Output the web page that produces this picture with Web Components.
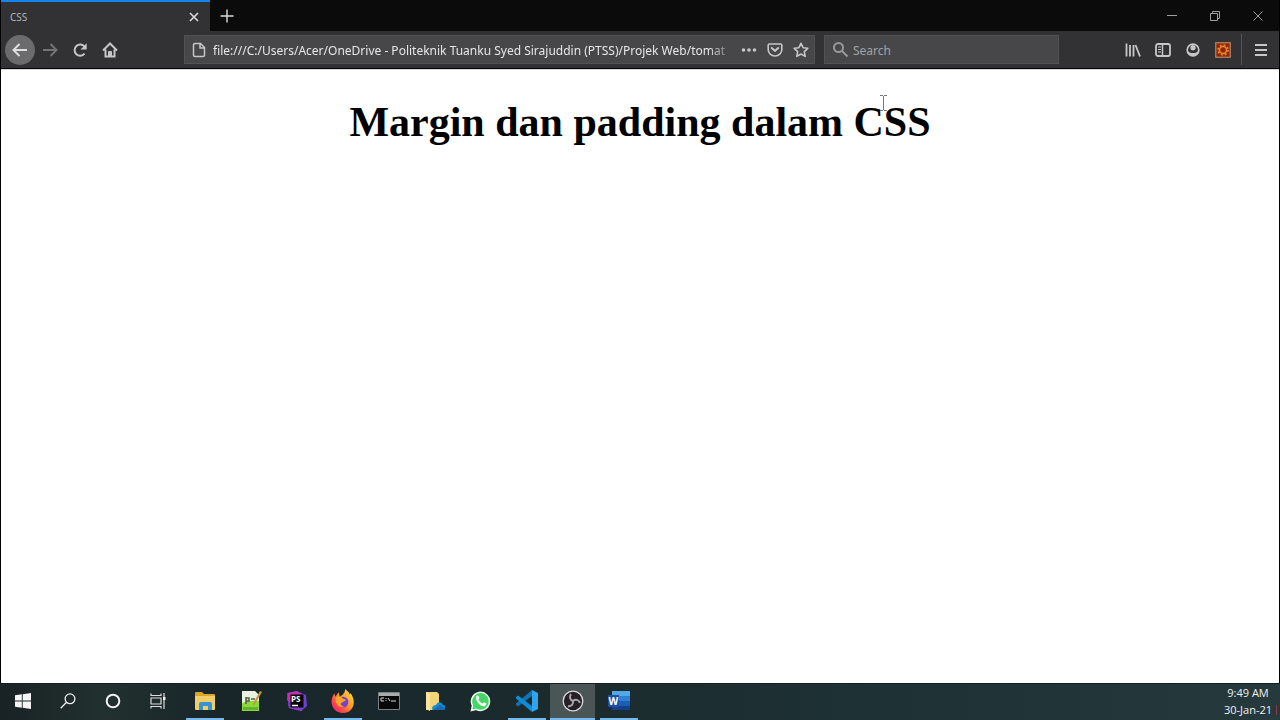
<!DOCTYPE html>
<html lang="ms">
<head>
<meta charset="utf-8">
<title>CSS</title>
<style>
html, body { margin: 0; height: 100%; background: #000; }
body { font-family: "Noto Sans", "Open Sans", sans-serif; font-size: 12px; }
</style>
</head>
<body>
<desktop-screen></desktop-screen>

<template id="desktop-screen">
  <style>
    :host { display: flex; flex-direction: column; min-height: 100vh; }
    .window { flex: 1; display: flex; flex-direction: column; padding: 0 1px; background: #000; }
    page-view { flex: 1; }
  </style>
  <div class="window">
    <tab-strip></tab-strip>
    <nav-bar></nav-bar>
    <page-view><span slot="title">Margin dan padding dalam CSS</span></page-view>
  </div>
  <task-bar></task-bar>
</template>

<template id="tab-strip">
  <style>
    :host { display: flex; height: 31px; background: #0b0b0c; }
    .tab { display: flex; align-items: center; justify-content: space-between; width: 209px; box-sizing: border-box; padding: 0 4px 0 9px; border-top: 2px solid #1484ee; background: #323234; color: #b4b4b6; font-size: 10px; }
    button { display: flex; align-items: center; justify-content: center; padding: 0; border: 0; background: none; color: #dcdcdc; }
    .close { width: 24px; height: 24px; }
    .new { width: 33px; }
    .controls { display: flex; margin-left: auto; }
    .controls button { width: 43px; color: #a0a0a0; }
    svg { display: block; fill: none; stroke: currentColor; }
  </style>
  <div class="tab"><span>CSS</span>
    <button class="close" aria-label="Close tab"><svg width="10" height="10" viewBox="0 0 10 10" stroke-width="1.6"><path d="M1 1l8 8M9 1l-8 8"/></svg></button>
  </div>
  <button class="new" aria-label="New tab"><svg width="14" height="14" viewBox="0 0 14 14" stroke-width="1.4"><path d="M7 .5v13M.5 7h13"/></svg></button>
  <div class="controls">
    <button aria-label="Minimize"><svg width="10" height="10" viewBox="0 0 10 10"><path d="M0 4.500h10"/></svg></button>
    <button aria-label="Restore"><svg width="10" height="10" viewBox="0 0 10 10"><path d="M.5 2.500h7v7h-7zM2.500 2.500v-2h7v7h-2"/></svg></button>
    <button aria-label="Close"><svg width="10" height="10" viewBox="0 0 10 10"><path d="M.5 .5l9 9M9.500 .5l-9 9"/></svg></button>
  </div>
</template>

<template id="nav-bar">
  <style>
    :host { display: flex; align-items: center; height: 37px; padding: 0 3px 0 4px; background: #323234; border-bottom: 1px solid #050505; color: #c6c6c8; }
    button { display: flex; flex: none; align-items: center; justify-content: center; width: 30px; height: 30px; padding: 0; border: 0; background: none; color: inherit; }
    svg { display: block; flex: none; fill: none; stroke: currentColor; stroke-width: 2; }
    .back { background: #6b6b6d; border-radius: 50%; color: #dedede; }
    .back + button { color: #737375; }
    .field { display: flex; align-items: center; box-sizing: border-box; height: 29px; border: 1px solid #525254; background: #474749; }
    .url { flex: 1; margin-left: 59px; padding-left: 6px; min-width: 0; }
    .url button { width: 26px; height: 26px; }
    .search { flex: none; width: 235px; margin: 0 59px 0 9px; padding-left: 7px; color: #98989a; }
    input { flex: 1; min-width: 0; height: 26px; padding: 2px 0 0; border: 0; outline: 0; box-sizing: border-box; background: none; font: inherit; color: #e6e6e6; }
    .url input { margin-left: 6px; -webkit-mask-image: linear-gradient(to left, transparent, #000 28px); mask-image: linear-gradient(to left, transparent, #000 28px); }
    .search input { margin-left: 4px; }
    input::placeholder { color: #a2a2a4; opacity: 1; }
    .rule { width: 1px; height: 31px; margin: 0 4px 0 3px; background: #545456; }
  </style>
  <button class="back" aria-label="Back"><svg width="16" height="16" viewBox="0 0 16 16"><path d="M15 8H2M7.500 2L1.500 8l6 6"/></svg></button>
  <button aria-label="Forward"><svg width="16" height="16" viewBox="0 0 16 16"><path d="M1 8h13M8.500 2l6 6-6 6"/></svg></button>
  <button aria-label="Reload"><svg width="16" height="16" viewBox="0 0 16 16"><path d="M12.500 11.700A5.600 5.600 0 1 1 12.600 4.700"/><path d="M14.700 1.200v6.200H8.500z" fill="currentColor" stroke="none"/></svg></button>
  <button aria-label="Home"><svg width="16" height="16" viewBox="0 0 16 16"><path d="M1 8.500L8 1.500l7 7M3.500 7.500V14.500h9V7.500"/><path d="M6.500 14V9.500h3V14" fill="currentColor" style="stroke-width:1"/></svg></button>
  <div class="field url">
    <svg width="16" height="16" viewBox="0 0 16 16" role="img" aria-label="Local file"><path d="M4 1.500h5.500l4 4V13a1.500 1.500 0 0 1-1.500 1.500H4A1.500 1.500 0 0 1 2.500 13V3A1.500 1.500 0 0 1 4 1.500zM9 2v4h4" style="stroke-width:1.500"/></svg>
    <input type="text" aria-label="Address" value="file:///C:/Users/Acer/OneDrive - Politeknik Tuanku Syed Sirajuddin (PTSS)/Projek Web/tomat">
    <button aria-label="Page actions"><svg width="16" height="16" viewBox="0 0 16 16"><g fill="currentColor" stroke="none"><circle cx="2.500" cy="8" r="1.800"/><circle cx="8" cy="8" r="1.800"/><circle cx="13.500" cy="8" r="1.800"/></g></svg></button>
    <button aria-label="Save to Pocket"><svg width="16" height="16" viewBox="0 0 16 16"><path d="M2.500 2h11A1.200 1.200 0 0 1 14.800 3.200V7.500A6.800 6.500 0 0 1 1.200 7.500V3.200A1.200 1.200 0 0 1 2.500 2z" style="stroke-width:1.600"/><path d="M4.800 6L8 9l3.200-3" stroke-linecap="round"/></svg></button>
    <button aria-label="Bookmark"><svg width="16" height="16" viewBox="0 0 16 16"><path d="M8 1.300l2.100 4.400 4.700.6-3.500 3.300.9 4.800L8 12l-4.200 2.400.9-4.800L1.200 6.300l4.700-.6z" style="stroke-width:1.600;stroke-linejoin:round"/></svg></button>
  </div>
  <div class="field search">
    <svg width="17" height="17" viewBox="0 0 17 17"><circle cx="6.500" cy="6.500" r="4.500"/><path d="M10 10l5.500 5.500"/></svg>
    <input type="search" aria-label="Search" placeholder="Search">
  </div>
  <button aria-label="Library"><svg width="16" height="16" viewBox="0 0 16 16" style="stroke-width:1.800"><path d="M1.500 1.500v13M5 3v11.500M8.500 3v11.500M10.500 3l4.500 11.500"/></svg></button>
  <button aria-label="Sidebars"><svg width="16" height="16" viewBox="0 0 16 16"><rect x="1" y="2" width="14" height="12" rx="2" style="stroke-width:1.800"/><path d="M7.500 2v12" style="stroke-width:1.500"/><path d="M3 5h3M3 7.500h3M3 10h3" style="stroke-width:1.200"/></svg></button>
  <button aria-label="Account"><svg width="16" height="16" viewBox="0 0 16 16"><circle cx="8" cy="8" r="5.800" style="stroke-width:1.700"/><circle cx="8" cy="5.700" r="2.600" fill="currentColor" stroke="none"/><path d="M2.500 8.500c1.500 3.400 9.500 3.400 11 0v2.500L8 14.300 2.500 11z" fill="currentColor" stroke="none"/></svg></button>
  <button aria-label="Extension"><svg width="16" height="16" viewBox="0 0 16 16"><rect x=".75" y=".75" width="14.500" height="14.500" fill="#8f2806" stroke="#b9846c" style="stroke-width:1.200"/><circle cx="8" cy="8" r="3.500" stroke="#e8892e" style="stroke-width:1.500"/><circle cx="8" cy="8" r="5" stroke="#e8892e" stroke-dasharray="1.900 2.027" style="stroke-width:1.600"/></svg></button>
  <span class="rule"></span>
  <button aria-label="Menu"><svg width="16" height="16" viewBox="0 0 16 16"><path d="M2 3h12M2 8h12M2 13h12"/></svg></button>
</template>

<template id="page-view">
  <style>
    :host { display: block; position: relative; background: #fff; border-top: 1px solid #d6d6d6; color: #000; }
    h1 { margin: 28px 0; text-align: center; font: bold 42px/48px "Liberation Serif", serif; }
    .pointer { position: absolute; top: 25px; left: calc(50% + 240px); fill: none; stroke: #777; }
  </style>
  <h1><slot name="title"></slot></h1>
  <svg class="pointer" width="7" height="16" viewBox="0 0 7 16"><path d="M0 .5h3M4 .5h3M3.500 1v14M0 15.500h3M4 15.500h3"/></svg>
</template>

<template id="task-bar">
  <style>
    :host { display: flex; height: 37px; box-sizing: border-box; border-top: 1px solid #14201f; background: linear-gradient(90deg, #192225, #22302f 8%, #18262a 17%, #1b2b2e 45%, #1f3336 75%, #263a3d); }
    .system { display: flex; margin-right: 2px; }
    .system task-button { width: 45px; }
    time { display: block; width: 56px; margin-left: auto; color: #f2f2f2; font-family: "Open Sans", "Noto Sans", sans-serif; font-size: 11px; line-height: 17px; text-align: center; }
    .notice { width: 1px; height: 10px; margin: 21px 3px 0 0; background: #8e3b48; }
    svg { display: block; }
  </style>
  <div class="system">
    <task-button name="Start"><svg width="16" height="16" viewBox="0 0 16 16" fill="#f5f5f5"><path d="M0 2.300l6.800-1V7.600H0zM7.700 1.200L16 0v7.600H7.700zM0 8.400h6.800v6.300L0 13.700zM7.700 8.400H16V16l-8.300-1.200z"/></svg></task-button>
    <task-button name="Search"><svg width="16" height="16" viewBox="0 0 16 16" fill="none" stroke="#eee" stroke-width="1.300"><circle cx="10" cy="5.800" r="4.900"/><path d="M6.500 9.300L.7 15.300"/></svg></task-button>
    <task-button name="Cortana"><svg width="16" height="16" viewBox="0 0 16 16" fill="none" stroke="#f2f2f2" stroke-width="2"><circle cx="8" cy="8" r="6.300"/></svg></task-button>
    <task-button name="Task view"><svg width="16" height="16" viewBox="0 0 16 16" fill="none" stroke="#ddd" stroke-width="1.200"><path d="M1 .5v2h10v-2M1 5h10v6H1zM1 15.500v-2h10v2M14 0v16"/><path d="M13 4h2.500v3H13z" fill="#eee" stroke="none"/></svg></task-button>
  </div>
  <task-button name="File Explorer" state="open"><svg width="22" height="20" viewBox="0 0 22 20"><path d="M1 2q0-1 1-1h6l2 2h10q1 0 1 1v14H1z" fill="#dca32b"/><path d="M1 5h20v13q0 1-1 1H2q-1 0-1-1z" fill="#f0cd68"/><path d="M5 19v-6q0-2 2-2h9q2 0 2 2v6h-4v-4H9v4z" fill="#3594d1"/></svg></task-button>
  <task-button name="Notepad++"><svg width="22" height="22" viewBox="0 0 22 22"><path d="M2 1h13l4 4v16H2z" fill="#e9f1df"/><path d="M2 13q8-3 17-2v10H2z" fill="#8ed83c"/><path d="M3 17h15v3H3z" fill="#5eb528"/><path d="M6 7v7M6 8h3v3H6M11 9h4" stroke="#4c5d42" fill="none" stroke-width="1.500"/><path d="M20 1l2 1-7 12-2 2 .3-3z" fill="#c49a43"/></svg></task-button>
  <task-button name="PhpStorm"><svg width="22" height="22" viewBox="0 0 22 22"><path d="M1 3l10-2 9 4 1 11-6 5-12-3L2 12z" fill="#6a43d0"/><path d="M2 3l9-2 4 3-11 9-3-3z" fill="#c22fb0"/><path d="M2 13l4 2 11 5-2 1-12-3z" fill="#8a38ce"/><path d="M4.500 4.500h13v13h-13z" fill="#080509"/><path d="M6 15.500h6" stroke="#fff" stroke-width="1.500"/><text x="5" y="11.500" font-family="Open Sans, sans-serif" font-weight="700" font-size="8" fill="#fff">PS</text></svg></task-button>
  <task-button name="Firefox" state="open"><svg width="24" height="24" viewBox="0 0 22 22"><defs><linearGradient id="fire" x1="1" y1="0" x2="0" y2="1"><stop stop-color="#fff044"/><stop offset=".45" stop-color="#ff9527"/><stop offset=".75" stop-color="#ff3c50"/><stop offset="1" stop-color="#e42795"/></linearGradient></defs><path d="M13 0c2 2 4 3 4 5l1-1c6 8 2 18-7 18C3 22-1 15 1 8l2-4 1 3 3-4 1 4c2-1 5-3 5-7z" fill="url(#fire)"/><circle cx="11" cy="12" r="5" fill="#7542cd"/><path d="M4 8c3-2 5-1 7 1l3 1-3 2c-3 1-3 3 1 4-5 2-8-2-8-8z" fill="#ffa42b"/></svg></task-button>
  <task-button name="Command Prompt"><svg width="22" height="20" viewBox="0 0 22 20"><path d="M.5 1.500h21v17H.5z" fill="#070808" stroke="#7b8281"/><path d="M1 2h20v3H1z" fill="#a7adad"/><path d="M6 7H3v3h3M8 7v1M8 9v1M10 7l2 3M13 10h5" stroke="#d6d6d6" fill="none"/></svg></task-button>
  <task-button name="OneDrive folder"><svg width="20" height="20" viewBox="0 0 20 20"><path d="M1 1h11l2 2v16H1z" fill="#f1d477"/><path d="M1 1l4 2v17l-4-2z" fill="#fbe6a0"/><path d="M7 18c0-3 2-4 4-4 2-4 6-3 7 0 3 0 3 5 0 5H9q-2 0-2-1z" fill="#168bd5"/><path d="M8 19l7-5 5 3q0 2-2 2z" fill="#176cb0"/></svg></task-button>
  <task-button name="WhatsApp"><svg width="22" height="22" viewBox="0 0 22 22"><path d="M2.500 15.500A9 9 0 1 1 6.300 19.300L1.500 20.500z" fill="#43d665" stroke="#f1fff3" stroke-width="1.500"/><path d="M6.500 6q1-1 2 0l1 2-1 1.500c1 2 2 3 4 4l1.500-1.200 2.500 1.200q0 2-2 2.700C10 17 4.500 10 6.500 6z" fill="#fff"/></svg></task-button>
  <task-button name="Visual Studio Code" state="open"><svg width="24" height="24" viewBox="0 0 24 24"><path d="M17 1v6L3 17.500l-2-1.500v-1.500z" fill="#1272b4"/><path d="M1 8l2-1.500L17 17v6L1 9.500z" fill="#138ad5"/><path d="M17 1l6 3v16l-6 3z" fill="#30a5ed"/></svg></task-button>
  <task-button name="OBS Studio" state="active"><svg width="22" height="22" viewBox="0 0 22 22"><circle cx="11" cy="11" r="9.800" fill="#242126" stroke="#ded9df" stroke-width="1.300"/><g fill="none" stroke="#aaa5ac" stroke-width="2"><path d="M11 11c-3-1-4-4-2-7"/><path d="M11 11c-3-1-4-4-2-7" transform="rotate(120 11 11)"/><path d="M11 11c-3-1-4-4-2-7" transform="rotate(240 11 11)"/></g></svg></task-button>
  <task-button name="Word" state="open"><svg width="24" height="22" viewBox="0 0 24 22"><path d="M5 1h18v5H5z" fill="#50a8e7"/><path d="M5 6h18v5H5z" fill="#317fd2"/><path d="M5 11h18v5H5z" fill="#1c5db5"/><path d="M5 16h18v4H5z" fill="#16418a"/><path d="M1 5h11v12H1z" fill="#1b4fa9"/><text x="1.500" y="14.500" font-family="Open Sans, sans-serif" font-weight="700" font-size="10" fill="#fff">W</text></svg></task-button>
  <time datetime="2021-01-30T09:49">9:49 AM<br>30-Jan-21</time><span class="notice"></span>
</template>

<template id="task-button">
  <style>
    :host { display: block; width: 46px; height: 36px; }
    button { display: flex; align-items: center; justify-content: center; width: 100%; height: 36px; padding: 0; border: 0; border-bottom: 2px solid transparent; background: none; }
    :host([state="open"]) button { width: 38px; margin: 0 auto; border-color: #76b9ed; }
    :host([state="active"]) button { width: 45px; background: #4a5656; border-color: #76b9ed; }
  </style>
  <button><slot></slot></button>
</template>

<script>
class TemplateElement extends HTMLElement {
  constructor() {
    super();
    const template = document.getElementById(this.localName);
    this.attachShadow({ mode: "open" }).append(template.content.cloneNode(true));
  }
}
class TaskButton extends TemplateElement {
  connectedCallback() {
    this.shadowRoot.querySelector("button").setAttribute("aria-label", this.getAttribute("name"));
  }
}
class TabStrip extends TemplateElement {}
class NavBar extends TemplateElement {}
class PageView extends TemplateElement {}
class TaskBar extends TemplateElement {}
class DesktopScreen extends TemplateElement {}
customElements.define("task-button", TaskButton);
customElements.define("tab-strip", TabStrip);
customElements.define("nav-bar", NavBar);
customElements.define("page-view", PageView);
customElements.define("task-bar", TaskBar);
customElements.define("desktop-screen", DesktopScreen);
</script>
</body>
</html>
